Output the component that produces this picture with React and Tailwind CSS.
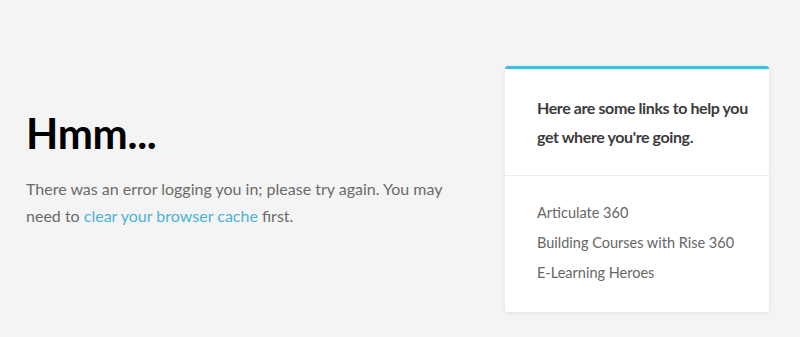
export default function App() {
  return (
    <div className="min-h-[337px] w-full bg-[#f4f4f4] flex items-start justify-between pl-[26px] pr-[31px] pt-[66px] font-['Lato','Noto_Sans',sans-serif]">
      <div className="w-[440px] pt-[41px]">
        <h1 className="text-[42px] leading-[52px] font-bold text-black tracking-[-0.3px]">Hmm...</h1>
        <p className="mt-[16px] text-[16px] leading-[27px] text-[#6b6b6b]">
          There was an error logging you in; please try again. You may need to{" "}
          <a className="text-[#4bb3d7]" href="#">clear your browser cache</a> first.
        </p>
      </div>
      <div className="w-[264px] bg-white border-t-[3px] border-[#52b4e4] rounded-[3px] shadow-[0_1px_4px_rgba(0,0,0,0.08)]">
        <div className="pl-[32px] pr-[20px] py-[24px] border-b border-[#ececec]">
          <p className="text-[16px] leading-[29px] font-bold text-[#3c3c3c] tracking-[-0.4px]">
            Here are some links to help you get where you're going.
          </p>
        </div>
        <div className="px-[32px] pt-[22px] pb-[24px] flex flex-col text-[14.5px] leading-[30px] text-[#666]">
          <a href="#">Articulate 360</a>
          <a href="#">Building Courses with Rise 360</a>
          <a href="#">E-Learning Heroes</a>
        </div>
      </div>
    </div>
  );
}
